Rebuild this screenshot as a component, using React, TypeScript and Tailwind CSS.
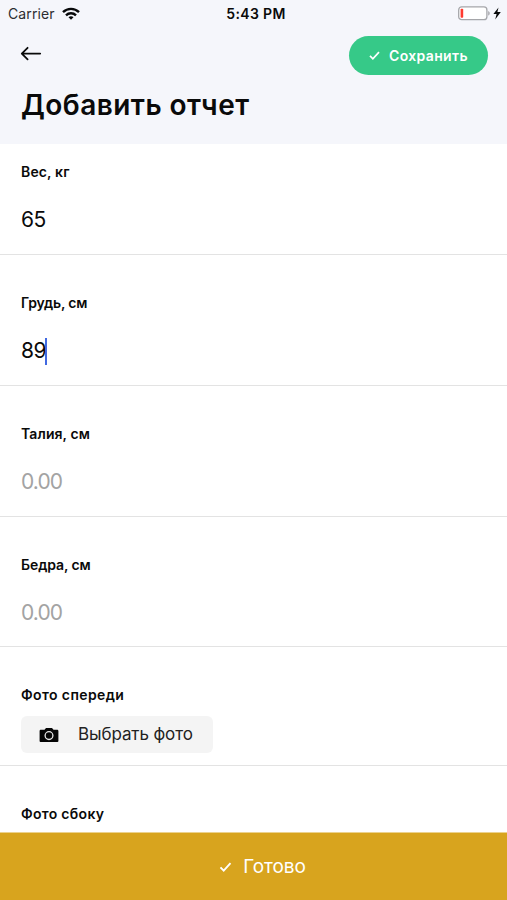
import type { ReactNode } from 'react'

const fields = [
  { label: 'Вес, кг', value: '65', box: 'h-[111px] pt-[18px]', text: 'tracking-[0.15px]' },
  { label: 'Грудь, см', value: '89', box: 'h-[131px] pt-[38px]', text: 'tracking-[-0.15px]', focused: true },
  { label: 'Талия, см', value: '', box: 'h-[131px] pt-[38px]', text: 'tracking-[0.1px]' },
  { label: 'Бедра, см', value: '', box: 'h-[130px] pt-[38px]', text: 'tracking-[-0.1px]' },
]

function Check({ className }: { className: string }) {
  return (
    <svg viewBox="0 0 12 10" className={className} fill="none" stroke="currentColor" strokeWidth="1.9">
      <path d="M1 5.4 4.2 8.6 11 1.2" />
    </svg>
  )
}

function Label({ className = '', children }: { className?: string; children: ReactNode }) {
  return (
    <div className={`text-[14px] leading-5 font-semibold whitespace-nowrap ${className}`}>{children}</div>
  )
}

function StatusBar() {
  return (
    <div className="flex h-7 items-center justify-between pr-[5px] pb-[2px] pl-2 text-[14px]">
      <div className="flex w-[100px] items-center gap-[7px] text-[#2c2d30]">
        <span className="tracking-[0.1px]">Carrier</span>
        <svg viewBox="0 0 18 13" className="h-[13px] w-[18px]" fill="none" stroke="#08090a" strokeWidth="2.4">
          <path d="M1 5.2C5.5.8 12.5.8 17 5.2" />
          <path d="M4 8.3c2.8-2.7 7.2-2.7 10 0" />
          <path d="M6.5 10.2c1.4-1.3 3.6-1.3 5 0L9 12.7Z" fill="#08090a" stroke="none" />
        </svg>
      </div>
      <div className="pl-[2px] font-semibold tracking-[0.35px]">5:43 PM</div>
      <div className="flex w-[100px] items-center justify-end">
        <svg viewBox="0 0 44 15" className="h-[15px] w-[44px]">
          <rect x=".7" y=".9" width="28.2" height="12.8" rx="3" fill="#fff" stroke="#a5a6aa" strokeWidth="1.3" />
          <rect x="2.6" y="2.8" width="2.6" height="9" rx=".8" fill="#ff3b30" />
          <path d="M30.2 5v4.6c2-.8 2-3.8 0-4.6Z" fill="#a5a6aa" />
          <path d="M40.5 1.4 35.4 8h3.2l-1.4 5.6L42.8 6h-3.4Z" fill="#08090a" />
        </svg>
      </div>
    </div>
  )
}

export default function App() {
  return (
    <div className="flex h-[900px] w-full flex-col overflow-hidden bg-white font-['Inter',sans-serif] text-[#0a0a0a]">
      <header className="h-[144px] shrink-0 bg-[#f5f6fb]">
        <StatusBar />
        <div className="flex items-start justify-between pt-2 pr-[19px] pl-[20px]">
          <button aria-label="Назад" className="mt-[10px]">
            <svg
              viewBox="0 0 22 16"
              className="h-4 w-[22px]"
              fill="none"
              stroke="#0a0a0a"
              strokeWidth="1.8"
              strokeLinecap="round"
              strokeLinejoin="round"
            >
              <path d="M20.2 7.6H2M7.6 1.8 1.8 7.6 7.6 13.4" />
            </svg>
          </button>
          <button className="flex h-[39px] w-[139px] items-center rounded-full bg-[#36c988] pl-[20px] text-white">
            <Check className="h-[9px] w-[11px]" />
            <span className="ml-[9px] text-[14px] font-semibold tracking-[0.35px] whitespace-nowrap">Сохранить</span>
          </button>
        </div>
        <h1 className="mt-[12px] pl-[21px] text-[28px] leading-9 font-semibold tracking-[0.45px] whitespace-nowrap">
          Добавить отчет
        </h1>
      </header>

      <main className="min-h-0 flex-1 overflow-hidden">
        {fields.map((field) => (
          <div key={field.label} className={`border-b border-[#e3e3e3] pl-[21px] ${field.box}`}>
            <Label className={field.text}>{field.label}</Label>
            <div className="mt-[24px] flex h-[28px] items-center text-[21px] leading-7">
              {field.value ? (
                <span className="tracking-[-0.6px]">{field.value}</span>
              ) : (
                <span className="tracking-[-0.9px] text-[#a3a3a3]">0.00</span>
              )}
              {field.focused && <span className="-ml-px h-[27px] w-[2.5px] bg-[#4169e1]" />}
            </div>
          </div>
        ))}
        <div className="h-[119px] border-b border-[#e3e3e3] pt-[38px] pl-[21px]">
          <Label className="tracking-[0.4px]">Фото спереди</Label>
          <button className="mt-[11px] flex h-[37px] w-[192px] items-center rounded-[6px] bg-[#f4f4f4] pl-[18px]">
            <svg viewBox="0 0 20 16" className="h-4 w-5">
              <path
                d="M2 2.8h3.5L7 .9h6l1.5 1.9H18c.8 0 1.4.5 1.4 1.2v9.9c0 .7-.6 1.2-1.4 1.2H2c-.8 0-1.4-.5-1.4-1.2V4c0-.7.6-1.2 1.4-1.2Z"
                fill="#050505"
              />
              <circle cx="10" cy="8.6" r="3.9" fill="none" stroke="#e8e8e8" strokeWidth="1.3" />
            </svg>
            <span className="ml-[19px] text-[17px] tracking-[-0.1px] whitespace-nowrap text-[#222]">Выбрать фото</span>
          </button>
        </div>
        <div className="pt-[38px] pl-[21px]">
          <Label className="tracking-[0.3px]">Фото сбоку</Label>
        </div>
      </main>

      <button className="flex h-[68px] shrink-0 items-center justify-center border-t border-[#ecd28e] bg-[#d8a41e] pl-[18px] text-white">
        <Check className="h-[10px] w-[13px]" />
        <span className="mt-px ml-[11px] text-[19px] tracking-[-0.1px] whitespace-nowrap">Готово</span>
      </button>
    </div>
  )
}
